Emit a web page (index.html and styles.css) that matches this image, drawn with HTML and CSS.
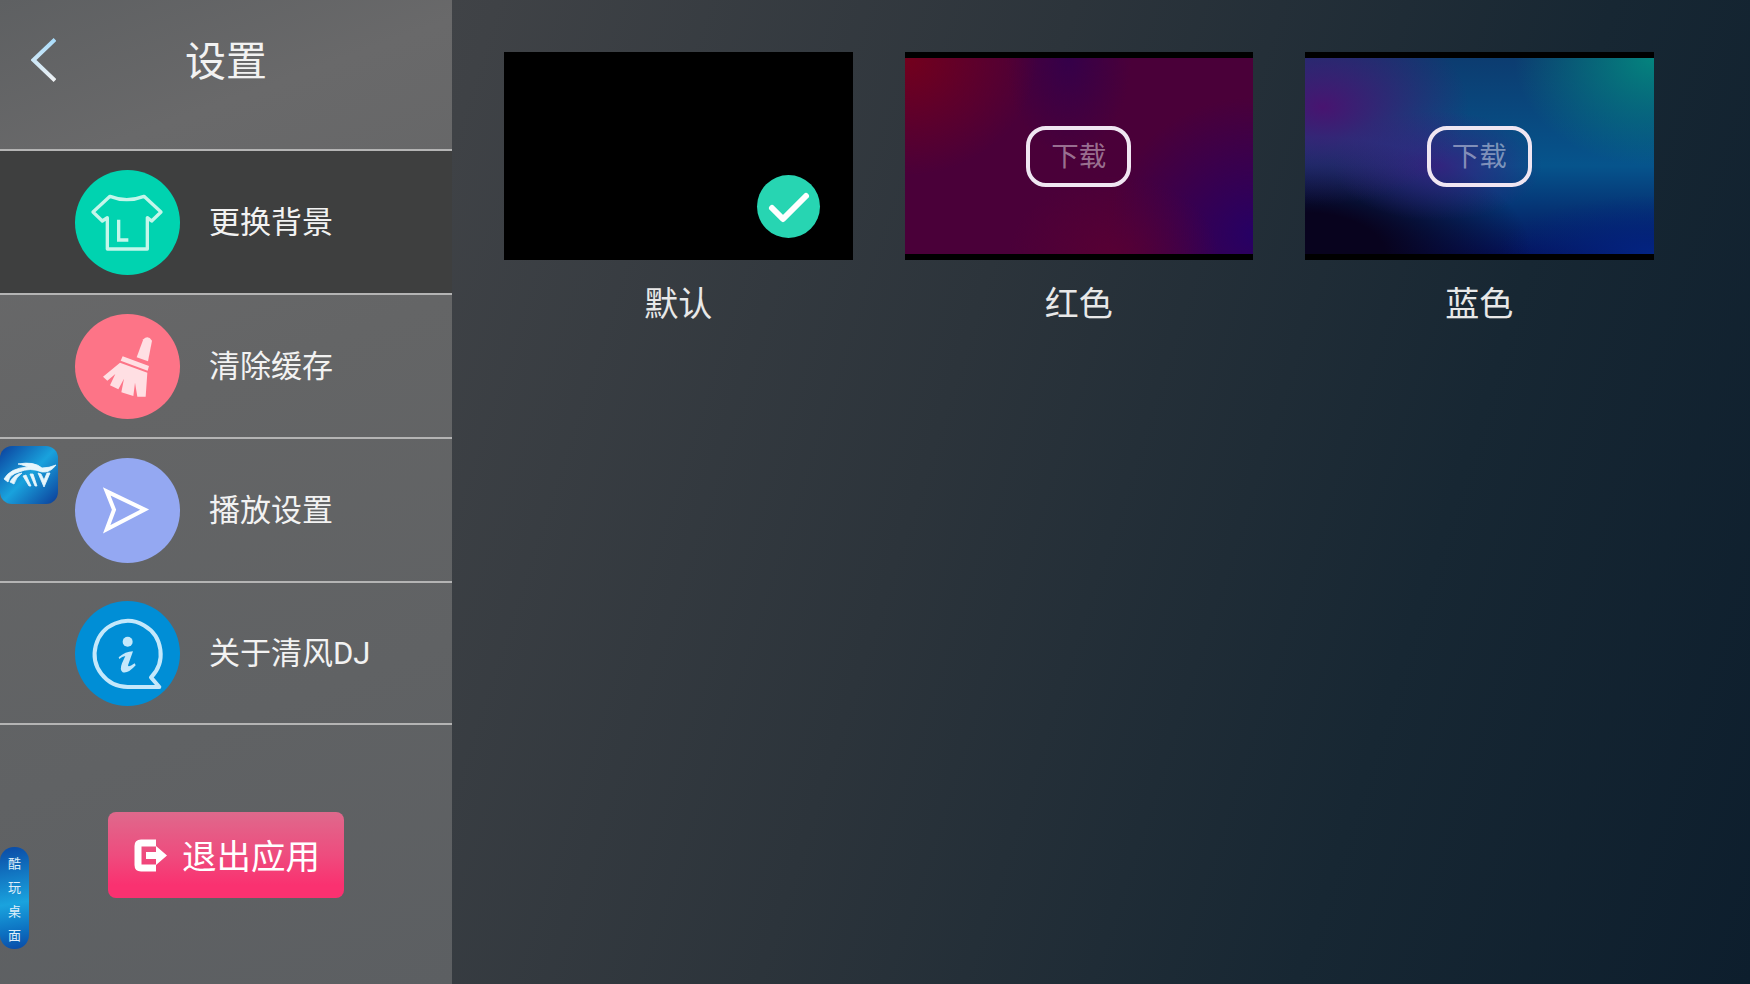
FILE: index.html
```html
<!DOCTYPE html>
<html lang="zh-CN">
<head>
    <meta charset="UTF-8">
    <title>设置</title>
    <link rel="stylesheet" href="styles.css">
</head>
<body>
    <div class="sidebar">
        <div class="header">
            <svg class="back" width="25" height="44" viewBox="0 0 25 44">
                <defs>
                    <linearGradient id="backFill" x1="0" y1="0" x2="0" y2="1">
                        <stop offset="0" stop-color="#a9dcfb"/>
                        <stop offset="1" stop-color="#eef1f3"/>
                    </linearGradient>
                </defs>
                <path d="M24 1.5 L2.5 22 L24 42.5" fill="none" stroke="url(#backFill)" stroke-width="4"/>
            </svg>
            <h1 class="title">设置</h1>
        </div>

        <div class="menu-item active">
            <svg class="menu-icon" viewBox="225 507 315 315">
                <circle cx="382.5" cy="664.5" r="157.5" fill="#00d3b0"/>
                <path d="M330 586 Q380 606 432 586 L483 633 L455 660 L442 650 V744 H322 V650 L307 660 L279 633 Z" fill="none" stroke="#c4f6ea" stroke-width="10" stroke-linejoin="round"/>
                <path d="M356 656 V717 H385" fill="none" stroke="#c4f6ea" stroke-width="10"/>
            </svg>
            <span>更换背景</span>
        </div>
        <div class="menu-item">
            <svg class="menu-icon" viewBox="225 70 315 315">
                <circle cx="382.5" cy="227.5" r="157.5" fill="#fd7487"/>
                <path d="M430 146 Q444 132 456 150 L444 212 L410 200 Z" fill="#ffdfe3"/>
                <path d="M368 197 L447 226 L443 240 L362 210 Z" fill="#ffdfe3"/>
                <path d="M360 216 L442 246 L437 318 L412 318 L405 276 L400 316 L364 305 L372 264 L355 296 L330 284 L346 250 L322 270 L309 258 Z" fill="#ffdfe3"/>
            </svg>
            <span>清除缓存</span>
        </div>
        <div class="menu-item">
            <svg class="menu-icon" viewBox="225 502 315 315">
                <circle cx="382.5" cy="659.5" r="157.5" fill="#94a8f2"/>
                <path d="M320 602 L434 657 L320 716 L342 657 Z" fill="none" stroke="#fff" stroke-width="12"/>
            </svg>
            <span>播放设置</span>
        </div>
        <div class="menu-item last">
            <svg class="menu-icon" viewBox="225 63 315 315">
                <circle cx="382.5" cy="220.5" r="157.5" fill="#008ed6"/>
                <path d="M453 292 A99 99 0 1 0 383 321 L478 321 Z" fill="none" stroke="#c4e8fb" stroke-width="12" stroke-linejoin="round"/>
                <circle cx="383" cy="185" r="15" fill="#c4e8fb"/>
                <path d="M356 232 Q376 214 399 214 L384 256 Q384 264 404 250 L407 256 Q384 282 368 277 Q358 270 366 250 L376 228 Q366 230 358 237 Z" fill="#c4e8fb"/>
            </svg>
            <span>关于清风<em class="latin">DJ</em></span>
        </div>

        <div class="exit-wrap">
            <div class="exit-btn">
                <svg width="34" height="33" viewBox="0 0 34 33">
                    <path d="M22 4 H7 Q4 4 4 7 V26 Q4 29 7 29 H22" fill="none" stroke="#fff" stroke-width="7"/>
                    <path d="M12 13 H22 V7 L33 16.5 L22 26 V20 H12 Z" fill="#fff"/>
                </svg>
                <span>退出应用</span>
            </div>
        </div>
    </div>

    <div class="main">
        <div class="skin">
            <div class="thumb">
                <div class="check">
                    <svg width="63" height="63" viewBox="0 0 63 63">
                        <path d="M15 33 L26 44 L49 21" fill="none" stroke="#fff" stroke-width="6" stroke-linecap="round" stroke-linejoin="round"/>
                    </svg>
                </div>
            </div>
            <div class="skin-name">默认</div>
        </div>
        <div class="skin">
            <div class="thumb">
                <div class="thumb-img red"><div class="download"><span>下载</span></div></div>
            </div>
            <div class="skin-name">红色</div>
        </div>
        <div class="skin">
            <div class="thumb">
                <div class="thumb-img blue"><div class="download"><span>下载</span></div></div>
            </div>
            <div class="skin-name">蓝色</div>
        </div>
    </div>

    <!-- floating desktop widgets on top of the app -->
    <svg class="float-logo" width="58" height="58" viewBox="0 0 58 58">
        <defs>
            <linearGradient id="logoFill" x1="0" y1="0" x2="1" y2="1">
                <stop offset="0" stop-color="#0b3f9c"/>
                <stop offset="0.5" stop-color="#19a2dd"/>
                <stop offset="1" stop-color="#0c3c98"/>
            </linearGradient>
        </defs>
        <rect width="58" height="58" rx="12" fill="url(#logoFill)"/>
        <g fill="#e6f6fc" stroke="#e6f6fc" stroke-width="0.8">
            <path d="M4 33 Q10 22 28 21 Q20 18 18 18 Q34 15 42 22 Q49 22 56 19 Q50 27 42 26 Q30 21 19 26 Q10 28 8 36 Z"/>
            <path d="M10 36 Q14 28 22 27 Q16 31 14 38 Z M23 30 L26 29 L31 40 L29 40 Z M30 28 L33 28 L37 40 L35 40 Z M38 27 L41 28 L44 34 L47 27 L50 27 L44 41 Z"/>
        </g>
    </svg>
    <div class="float-pill">
        <span>酷</span><span>玩</span><span>桌</span><span>面</span>
    </div>
</body>
</html>
```

FILE: styles.css
```css
* {
    box-sizing: border-box;
}
html, body {
    height: 100%;
}
body {
    margin: 0;
    display: flex;
    height: 984px;
    overflow: hidden;
    font-family: "Noto Sans CJK SC", "Noto Sans", sans-serif;
    color: #f2f2f2;
    background: linear-gradient(108deg, #4a4c4f 0%, #3f4246 24%, #2c343b 52%, #172733 78%, #0d1e2d 100%);
}

/* left column */
.sidebar {
    width: 452px;
    height: 984px;
    flex-shrink: 0;
    display: flex;
    flex-direction: column;
    background: linear-gradient(160deg, #5e6062 0%, #69696a 16%, #646566 40%, #5c5f62 100%);
}
.header {
    height: 151px;
    padding: 37px 0 0 31px;
    display: grid;
    grid-template-columns: 25px 1fr;
    align-items: start;
    border-bottom: 2px solid #b4b4b4;
}
.back {
    margin-top: 1px;
}
.title {
    margin: -6px 0 0 -56px;
    text-align: center;
    font-size: 41px;
    font-weight: 400;
    line-height: 54px;
}
.menu-item {
    height: 144px;
    padding-left: 75px;
    display: flex;
    align-items: center;
    gap: 29px;
    font-size: 31px;
    border-bottom: 2px solid #b4b4b4;
}
.menu-item span {
    padding-bottom: 6px;
}
.menu-item.active {
    background: #3e3f3f;
}
.menu-item.last {
    height: 142px;
}
.menu-icon {
    width: 105px;
    height: 105px;
}
.latin {
    font-family: Roboto, sans-serif;
    font-style: normal;
}

.exit-wrap {
    flex: 1;
    display: flex;
    align-items: center;
    justify-content: center;
}
.exit-btn {
    width: 236px;
    height: 86px;
    padding-left: 26px;
    display: flex;
    align-items: center;
    gap: 14px;
    color: #fff;
    font-size: 34.5px;
    border-radius: 8px;
    background: linear-gradient(180deg, #df698c 0%, #ee4c7e 50%, #fa3170 85%);
}
.exit-btn span {
    padding-bottom: 2px;
}
.exit-btn svg {
    margin-top: 2px;
}

/* skins */
.main {
    flex: 1;
    padding: 52px 0 0 52px;
    display: grid;
    grid-template-columns: repeat(3, 348.5px);
    column-gap: 52px;
    align-content: start;
}
.skin-name {
    margin-top: 18px;
    text-align: center;
    font-size: 34px;
    line-height: 48px;
    color: #e8e8e8;
}
.thumb {
    position: relative;
    height: 208px;
    padding: 6px 0;
    background: #000;
}
.thumb-img {
    height: 100%;
    display: flex;
    align-items: center;
    justify-content: center;
}
.red {
    background:
        radial-gradient(ellipse 38% 60% at 0% 0%, rgba(120, 0, 25, .9), transparent),
        radial-gradient(ellipse 18% 50% at 47% 0%, rgba(50, 0, 75, .9), transparent),
        radial-gradient(ellipse 30% 40% at 60% 100%, rgba(90, 0, 50, .8), transparent),
        radial-gradient(ellipse 42% 70% at 100% 90%, rgba(38, 0, 100, 1), transparent),
        #4a0039;
}
.blue {
    background:
        radial-gradient(ellipse 40% 55% at 100% 0%, rgba(4, 132, 126, 1), transparent),
        radial-gradient(ellipse 42% 50% at 5% 25%, rgba(72, 20, 112, 1), transparent),
        radial-gradient(ellipse 30% 28% at 38% 55%, rgba(58, 28, 125, .85), transparent),
        radial-gradient(ellipse 65% 60% at 0% 100%, rgba(8, 3, 30, 1) 35%, transparent),
        radial-gradient(ellipse 45% 30% at 100% 100%, rgba(3, 36, 130, 1), transparent),
        linear-gradient(180deg, #0c3c70 0%, #06548c 55%, #04125c 100%);
}
.download {
    width: 105px;
    height: 61px;
    display: flex;
    align-items: center;
    justify-content: center;
    font-size: 27.5px;
    color: rgba(255, 255, 255, .45);
    border: 4px solid #f0e6f2;
    border-radius: 20px;
}
.download span {
    padding-bottom: 5px;
}
.check {
    position: absolute;
    right: 33px;
    bottom: 22px;
    width: 63px;
    height: 63px;
    border-radius: 50%;
    background: #27d5b2;
}

/* floating widgets */
.float-logo {
    position: absolute;
    left: 0;
    top: 446px;
}
.float-pill {
    position: absolute;
    left: 0;
    top: 847px;
    width: 29px;
    height: 102px;
    padding: 6px 0 4px;
    display: flex;
    flex-direction: column;
    align-items: center;
    justify-content: space-between;
    font-size: 13px;
    line-height: 20px;
    color: #dfeffa;
    border-radius: 14px;
    background: linear-gradient(170deg, #0a4aa6 0%, #1aa3de 55%, #0c6fc0 82%, #0a4aa6 100%);
}
```
